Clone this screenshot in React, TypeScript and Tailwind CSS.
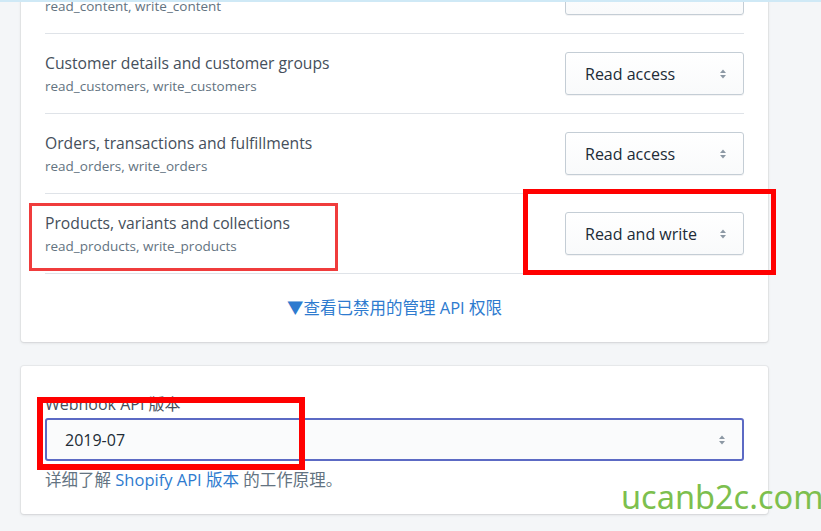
const font = {
  fontFamily: '"Open Sans", "Noto Sans CJK SC", sans-serif',
};

const scopes = [
  { title: "Online store pages", sub: "read_content, write_content", value: "Read access" },
  { title: "Customer details and customer groups", sub: "read_customers, write_customers", value: "Read access" },
  { title: "Orders, transactions and fulfillments", sub: "read_orders, write_orders", value: "Read access" },
  { title: "Products, variants and collections", sub: "read_products, write_products", value: "Read and write" },
];

const Arrows = () => (
  <svg width="8" height="12" viewBox="0 0 8 12" className="text-[#8c98a4]">
    <path d="M4 1.5 L7 5 H1 Z" fill="currentColor" />
    <path d="M4 10.5 L7 7 H1 Z" fill="currentColor" />
  </svg>
);

const SelectBox = ({ value }: { value: string }) => (
  <div className="w-[179px] h-[43px] flex items-center justify-between pl-[19px] pr-[16px] rounded-[3px] border border-[#c4cdd5] bg-gradient-to-b from-[#ffffff] to-[#f9fafb] shadow-[0_1px_0_rgba(22,29,37,0.05)] text-[16px] text-[#212b36]">
    <span>{value}</span>
    <Arrows />
  </div>
);

export default function App() {
  return (
    <div className="relative w-[821px] h-[531px] overflow-hidden bg-[#f4f6f8]" style={font}>
      <div className="absolute top-0 left-0 w-full h-[2px] bg-[#cfe9f6]" />

      <div className="ml-[21px] w-[747px] -mt-[46px] bg-white rounded-[3px] shadow-[0_0_0_1px_rgba(63,63,68,0.05),0_1px_3px_0_rgba(63,63,68,0.15)]">
        <div className="px-[24px]">
          {scopes.map((s) => (
            <div
              key={s.sub}
              className="h-[80px] flex items-center justify-between border-b border-[#dfe3e8]"
            >
              <div className="flex flex-col pt-[2px] gap-[1px]">
                <span className="text-[15.7px] leading-[22px] text-[#454f5b]">{s.title}</span>
                <span className="text-[13.5px] leading-[22px] text-[#637381]">{s.sub}</span>
              </div>
              <SelectBox value={s.value} />
            </div>
          ))}
        </div>
        <div className="h-[68px] flex items-center justify-center text-[16.5px] text-[#2e7bcf]">
          ▼查看已禁用的管理 API 权限
        </div>
      </div>

      <div className="ml-[21px] mt-[24px] w-[747px] bg-white rounded-[3px] px-[24px] pt-[28px] pb-[24px] shadow-[0_0_0_1px_rgba(63,63,68,0.05),0_1px_3px_0_rgba(63,63,68,0.15)]">
        <div className="text-[16px] leading-[20px] text-[#454f5b]">Webhook API 版本</div>
        <div className="mt-[4px] h-[43px] flex items-center justify-between pl-[18px] pr-[16px] rounded-[3px] border-2 border-[#5c6ac4] bg-[#fafbfc] text-[16px] text-[#212b36]">
          <span>2019-07</span>
          <Arrows />
        </div>
        <div className="mt-[9px] text-[16.5px] leading-[20px] text-[#637381]">
          详细了解 <span className="text-[#2e7bcf]">Shopify API 版本</span> 的工作原理。
        </div>
      </div>

      {/* annotations */}
      <div className="absolute left-[29px] top-[203px] w-[309px] h-[68px] border-[3px] border-[#f03c3c]" />
      <div className="absolute left-[523px] top-[189px] w-[253px] h-[86px] border-[5px] border-[#ff0000]" />
      <div className="absolute left-[37px] top-[397px] w-[268px] h-[73px] border-[6px] border-[#ff0000]" />

      <div
        className="absolute left-[621px] top-[473px] text-[32.5px] leading-[48px] text-[#7dbf4e]"
        style={{ fontFamily: '"Noto Sans", sans-serif' }}
      >
        ucanb2c.com
      </div>
    </div>
  );
}
